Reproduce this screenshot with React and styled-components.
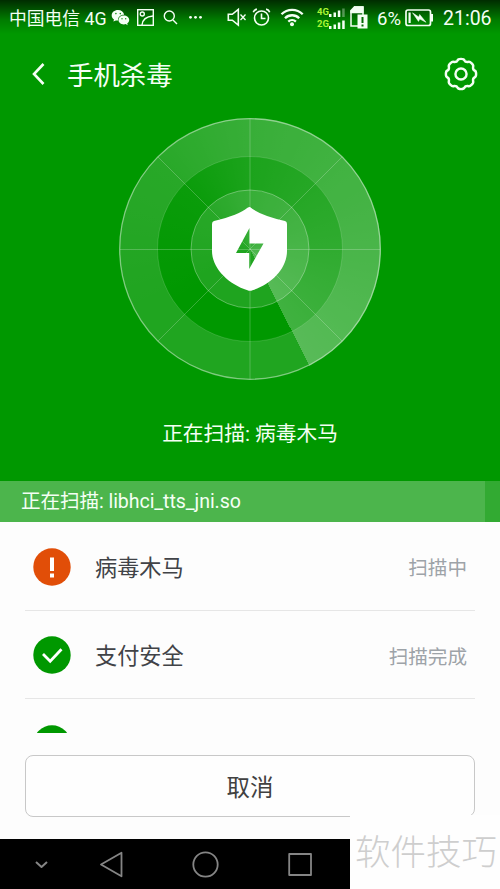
import React from 'react';
import styled, { createGlobalStyle } from 'styled-components';

const GlobalStyle = createGlobalStyle`
    * {
        box-sizing: border-box;
    }
    body {
        margin: 0;
        font-family: Roboto, 'Noto Sans CJK SC', sans-serif;
        background-color: #fdfdfd;
    }
`

const Screen = styled.div`
    width: 500px;
    height: 889px;
    display: flex;
    flex-direction: column;
    position: relative;
    overflow: hidden;
    background-color: #fdfdfd;
`

const Top = styled.div`
    height: 481px;
    flex-shrink: 0;
    display: flex;
    flex-direction: column;
    align-items: center;
    color: #f4fff4;
    background: linear-gradient(#002c00 0, #005000 9px, #007c00 20px, #009800 34px);
`

const StatusBar = styled.div`
    width: 500px;
    height: 36px;
    display: flex;
    align-items: center;
    padding-left: 9px;
    svg {
        display: block;
        flex-shrink: 0;
    }
`

const StatusText = styled.span`
    font-size: ${props => props.$size}px;
    line-height: 24px;
    margin-left: ${props => props.$left || 0}px;
    padding-top: 1px;
    width: ${props => props.$width}px;
    white-space: nowrap;
`

const RightGroup = styled.div`
    display: flex;
    align-items: center;
    margin-left: 18px;
`

const Signals = styled.div`
    width: 29px;
    height: 24px;
    margin: 0 4px 0 13px;
    display: flex;
    flex-direction: column;
    gap: 1px;
`

const Signal = styled.div`
    height: 11px;
    display: flex;
    align-items: flex-end;
    font-size: 9.5px;
    line-height: 11px;
    font-weight: bold;
    color: #a8f534;
`

const Header = styled.div`
    width: 500px;
    height: 76px;
    display: flex;
    align-items: center;
    padding: 0 21px 0 31px;
`

const Title = styled.h1`
    flex: 1;
    margin: 0 0 0 20px;
    padding-top: 3px;
    font-size: 26.4px;
    line-height: 36px;
    font-weight: 400;
`

/* the sweep brightens clockwise and stops at its leading edge */
const Radar = styled.div`
    width: 262px;
    height: 262px;
    margin-top: 6px;
    margin-right: 1px;
    border-radius: 50%;
    background: conic-gradient(from 153deg, transparent 0deg, transparent 80deg, rgba(255, 255, 255, 0.04) 160deg, rgba(255, 255, 255, 0.11) 207deg, rgba(255, 255, 255, 0.18) 290deg, rgba(255, 255, 255, 0.25) 360deg);
    svg {
        display: block;
    }
`

const ScanText = styled.div`
    margin-top: 39px;
    font-size: 20.7px;
    line-height: 30px;
`

const FileBar = styled.div`
    height: 41px;
    flex-shrink: 0;
    background-color: #32aa32;
`

const Progress = styled.div`
    height: 41px;
    padding-left: 21px;
    font-size: 19.6px;
    line-height: 42px;
    letter-spacing: -0.08px;
    color: #f4fff4;
    background-color: #4cb54c;
`

const List = styled.div`
    height: 211px;
    flex-shrink: 0;
    overflow: hidden;
    padding: 0 25px;
`

const Row = styled.div`
    height: 88.5px;
    display: flex;
    align-items: center;
    padding: 2px 8px 0;
    border-bottom: 1px solid #e6e6e6;
    svg {
        display: block;
    }
`

const RowName = styled.div`
    flex: 1;
    margin-left: 24px;
    padding-bottom: 2px;
    font-size: 22.2px;
    color: #414347;
`

const RowStatus = styled.div`
    font-size: 19.6px;
    color: #9da3a8;
`

const Footer = styled.div`
    flex: 1;
    padding: 22px 25px;
`

const CancelButton = styled.button`
    display: block;
    width: 450px;
    height: 62px;
    padding: 5px 0 0;
    border: 1px solid #c8c8c8;
    border-radius: 8px;
    background-color: #fefefe;
    font-family: inherit;
    font-size: 23.5px;
    line-height: 55px;
    color: #414141;
`

const NavBar = styled.div`
    height: 50px;
    flex-shrink: 0;
    background-color: #000;
    svg {
        display: block;
    }
`

const Watermark = styled.div`
    position: absolute;
    right: 0;
    bottom: 0;
    width: 150px;
    height: 74px;
    padding-left: 5px;
    background-color: #fefefe;
    color: #cecece;
    font-size: 35.5px;
    font-weight: 300;
    line-height: 76px;
    white-space: nowrap;
`

const LeftIcons = () => (
    <svg width="98" height="36" viewBox="110 0 98 36" fill="none" stroke="#f4fff4" strokeWidth="1.4">
        <g stroke="none" fill="#f4fff4">
            <path d="M118 10c-3.600 0-6.300 2.400-6.300 5.400 0 1.700.9 3.200 2.300 4.200l-.6 2 2.500-1.200c.7.200 1.400.2 2.100.2-.4-3.600 2.700-6.100 6.200-5.900C123.600 12 121 10 118 10z" />
            <path d="M123.800 15.600c-3 0-5.300 2-5.300 4.400s2.400 4.400 5.300 4.400c.7 0 1.300-.1 1.900-.3l2 1.100-.5-1.800c1.200-.8 2-2 2-3.400 0-2.400-2.400-4.400-5.400-4.400z" />
            <circle cx="190.500" cy="17.300" r="1.400" />
            <circle cx="195.500" cy="17.300" r="1.400" />
            <circle cx="200.500" cy="17.300" r="1.400" />
        </g>
        <g fill="#109010" stroke="none">
            <circle cx="115.900" cy="13.600" r=".8" />
            <circle cx="120.300" cy="13.600" r=".8" />
            <circle cx="122" cy="18.800" r=".7" />
            <circle cx="125.700" cy="18.800" r=".7" />
        </g>
        <rect x="137.700" y="9.700" width="15.600" height="15.600" />
        <circle cx="142.300" cy="14" r="2" />
        <path d="M142 25c.5-5.500 4-8.500 11-9" />
        <circle cx="169.300" cy="16" r="5" />
        <path d="M173 20l4 4" />
    </svg>
)

const RightIcons = () => (
    <svg width="78" height="36" viewBox="226 0 78 36" fill="none" stroke="#f4fff4" strokeWidth="1.600">
        <path d="M228.300 14.300h4l6-4.800v15.500l-6-4.800h-4z" />
        <path d="M240.500 14.500l5 5.500m0-5.500l-5 5.500" strokeWidth="1.300" />
        <circle cx="261.500" cy="18" r="7" />
        <path d="M261.500 13.500v5h4M253.300 12.300c.5-1.600 1.800-2.800 3.600-3.200M269.700 12.300c-.5-1.600-1.800-2.800-3.600-3.200" />
        <g strokeWidth="2.300">
            <path d="M281.500 14.300a15 15 0 0 1 21.200 0" />
            <path d="M285 18.200a10 10 0 0 1 14.200 0" />
            <path d="M288.300 21.700a5.500 5.500 0 0 1 7.600 0" />
        </g>
        <circle cx="292" cy="24.300" r="2" fill="#f4fff4" stroke="none" />
    </svg>
)

const Bars = ({ weak }) => (
    <svg width="17" height="10" viewBox="0 0 17 10" fill="#f4fff4">
        <rect x="0" y="7" width="2.500" height="3" />
        <rect x="4.500" y="5.500" width="2.500" height="4.500" />
        <rect x="8.800" y="3.500" width="2.500" height="6.500" />
        <rect x="13.200" y="1.500" width="2.500" height="8.500" opacity={weak ? 0.35 : 1} />
    </svg>
)

const SimIcon = () => (
    <svg width="18" height="24" viewBox="0 0 18 24">
        <path d="M4 1h9v9M1 4.500V20h8" fill="none" stroke="#f4fff4" strokeWidth="1.500" />
        <path d="M.3 4.300L4 .3h9.500v7H.3z" fill="#f4fff4" />
        <rect x="7.500" y="8.500" width="10" height="14" fill="#f4fff4" />
        <path d="M12.500 11v6M12.500 18.500v2" stroke="#006b00" strokeWidth="2" />
    </svg>
)

const BatteryIcon = () => (
    <svg width="29" height="20" viewBox="0 0 29 20">
        <rect x="1" y="2" width="24.500" height="15.500" rx="2" fill="none" stroke="#f4fff4" strokeWidth="1.700" />
        <path d="M26 6h2v7.500h-2z" fill="#f4fff4" />
        <path d="M3.500 4.500h2.200v10.500H3.500z" fill="#f4fff4" />
        <path d="M7.500 4.800l6.300 4.200.9-2.500 6.300 7.800-6.200-3.200-1.300 2.300z" fill="#f4fff4" stroke="#f4fff4" strokeWidth=".5" />
    </svg>
)

const BackIcon = () => (
    <svg width="16" height="26" viewBox="0 0 16 26">
        <path d="M12.500 3L3 13l9.500 10" fill="none" stroke="#f4fff4" strokeWidth="2.600" />
    </svg>
)

const GearIcon = () => (
    <svg width="36" height="36" viewBox="-18.500 -18.500 37 37" fill="none" stroke="#f4fff4" strokeWidth="2.500" strokeLinejoin="round">
        <path d="M-3.600-13.900C-2.800-16.100 2.800-16.100 3.600-13.900Q4.300-12.100 7.300-12.400C9.400-13.400 13.400-9.400 12.400-7.300Q12.100-4.300 13.900-3.600C16.100-2.800 16.100 2.800 13.900 3.600Q12.100 4.300 12.400 7.300C13.400 9.400 9.400 13.400 7.300 12.400Q4.300 12.100 3.600 13.900C2.800 16.100-2.800 16.100-3.600 13.900Q-4.300 12.100-7.300 12.400C-9.400 13.400-13.400 9.400-12.400 7.300Q-12.100 4.300-13.900 3.600C-16.100 2.800-16.100-2.800-13.900-3.600Q-12.100-4.300-12.400-7.300C-13.400-9.400-9.400-13.400-7.300-12.400Q-4.300-12.100-3.600-13.900z" />
        <circle cx="0" cy="0" r="5.700" />
    </svg>
)

const RadarDrawing = () => (
    <svg width="262" height="262" viewBox="9 8 262 262">
        <g fill="none" stroke="#fff">
            <circle cx="140" cy="139" r="111.500" strokeWidth="38" strokeOpacity=".125" />
            <circle cx="140" cy="139" r="130.300" strokeWidth="1.300" strokeOpacity=".45" />
            <circle cx="140" cy="139" r="92.500" strokeOpacity=".14" />
            <circle cx="140" cy="139" r="59" fill="#fff" fillOpacity=".12" strokeOpacity=".3" />
            <path d="M140 9v260M10 139.500h260M48 47l184 184M232 47L48 231" strokeOpacity=".22" />
        </g>
        <path
            fill="#fff"
            fillRule="evenodd"
            d="M140 97Q149 105 175 111Q177 111.500 177 114V141C177 158 162 174 142.500 180.300Q140 181.300 137.500 180.300C118 174 102 158 102 141V114Q102 111.500 104 111Q129 105 137.500 97.800Q139 96.700 140 97zM139.500 118L126 143h13.200v16L153.500 133.500H139.500z"
        />
    </svg>
)

const AlertIcon = () => (
    <svg width="38" height="38" viewBox="0 0 38 38">
        <circle cx="19" cy="19" r="18.700" fill="#e14e08" />
        <path d="M19 9.500v13.500M19 25.500v4" stroke="#fff" strokeWidth="4" />
    </svg>
)

const CheckIcon = () => (
    <svg width="38" height="38" viewBox="0 0 38 38">
        <circle cx="19" cy="19" r="18.700" fill="#009800" />
        <path d="M10 18l7.200 7.200L28.500 13.300" fill="none" stroke="#fff" strokeWidth="2.800" />
    </svg>
)

const NavIcons = () => (
    <svg width="350" height="50" viewBox="0 0 350 50" fill="none" stroke="#858585" strokeWidth="1.800" strokeLinejoin="round">
        <path d="M36 23l5.500 5 5.500-5" strokeWidth="2" />
        <path d="M101 25.500l20.500-11.800v23.600z" />
        <circle cx="205.500" cy="25.500" r="12.200" />
        <rect x="289.200" y="15" width="21.800" height="21" />
    </svg>
)

const rows = [
    { name: '病毒木马', status: '扫描中', alert: true },
    { name: '支付安全', status: '扫描完成' },
]

export default function App() {
    return (
        <Screen>
            <GlobalStyle />
            <Top>
                <StatusBar>
                    <StatusText $size={17.8} $width={101}>中国电信 4G</StatusText>
                    <LeftIcons />
                    <RightGroup>
                        <RightIcons />
                        <Signals>
                            <Signal>4G<Bars weak /></Signal>
                            <Signal>2G<Bars /></Signal>
                        </Signals>
                        <SimIcon />
                        <StatusText $size={18.5} $left={9} $width={28}>6%</StatusText>
                        <BatteryIcon />
                        <StatusText $size={19.5} $left={9} $width={52}>21:06</StatusText>
                    </RightGroup>
                </StatusBar>
                <Header>
                    <BackIcon />
                    <Title>手机杀毒</Title>
                    <GearIcon />
                </Header>
                <Radar>
                    <RadarDrawing />
                </Radar>
                <ScanText>正在扫描: 病毒木马</ScanText>
            </Top>
            <FileBar>
                <Progress style={{ width: '97%' }}>正在扫描: libhci_tts_jni.so</Progress>
            </FileBar>
            <List>
                {rows.map(row => (
                    <Row key={row.name}>
                        {row.alert ? <AlertIcon /> : <CheckIcon />}
                        <RowName>{row.name}</RowName>
                        <RowStatus>{row.status}</RowStatus>
                    </Row>
                ))}
                <Row>
                    <CheckIcon />
                </Row>
            </List>
            <Footer>
                <CancelButton>取消</CancelButton>
            </Footer>
            <NavBar>
                <NavIcons />
            </NavBar>
            <Watermark>软件技巧</Watermark>
        </Screen>
    )
}
